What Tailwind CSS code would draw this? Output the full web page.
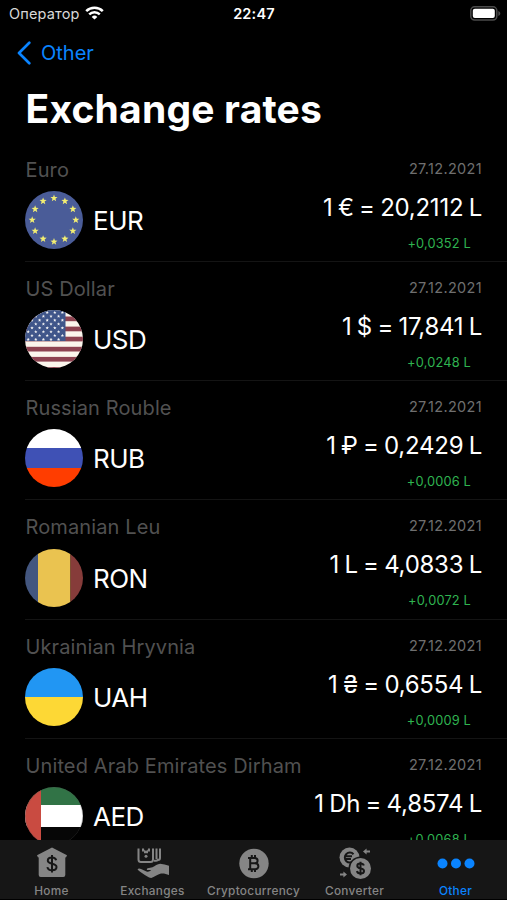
<!DOCTYPE html>
<html lang="en">
<head>
<meta charset="utf-8">
<meta name="viewport" content="width=device-width, initial-scale=1">
<title>Exchange rates</title>
<script src="https://cdn.jsdelivr.net/npm/@tailwindcss/browser@4"></script>
</head>
<body class="bg-black">
<div class="relative flex h-[900px] w-[507px] flex-col overflow-hidden bg-black font-['Inter','Liberation_Sans',sans-serif] text-white">

  <!-- Status bar -->
  <header class="grid h-[27px] shrink-0 grid-cols-3 items-center pr-[6px] pl-[9px]">
    <div class="flex items-center gap-[5px]">
      <span class="text-[14.5px] leading-[27px] tracking-[0.15px] text-[#d8d8d8]">Оператор</span>
      <svg class="mb-[1px] h-[14px] w-[19px]" viewBox="0 0 19 14" fill="none" stroke="#fff" stroke-width="2.5">
        <path d="M1.2 5.1a11.8 11.8 0 0 1 16.6 0"/>
        <path d="M4.2 8.4a7.6 7.6 0 0 1 10.6 0"/>
        <path d="M9.5 13.6 6.7 10.9a4 4 0 0 1 5.6 0z" fill="#fff" stroke="none"/>
      </svg>
    </div>
    <div class="pr-[2px] text-center text-[14.5px] font-semibold tracking-[0.2px]">22:47</div>
    <svg class="h-[15px] w-[31px] justify-self-end" viewBox="0 0 31 15">
      <rect x=".8" y=".8" width="26" height="13.2" rx="3.8" fill="none" stroke="#4b4b4b" stroke-width="1.5"/>
      <rect x="2.8" y="2.8" width="22" height="9.2" rx="2" fill="#fff"/>
      <path d="M28.3 5v5c1.2-.5 2-1.400 2-2.500s-.8-2-2-2.500z" fill="#4b4b4b"/>
    </svg>
  </header>

  <!-- Back navigation -->
  <nav class="flex h-[51px] shrink-0 items-center gap-[10.500px] pl-[16.500px] text-[#0a84ff]">
    <svg class="h-[24px] w-[14px]" viewBox="0 0 14 24" fill="none" stroke="currentColor" stroke-width="2.700" stroke-linecap="round" stroke-linejoin="round"><path d="M12.300 1.800 2 12l10.300 10.200"/></svg>
    <span class="text-[20px]">Other</span>
  </nav>

  <h1 class="h-[64.700px] shrink-0 pl-[25.500px] text-[39px] leading-[62px] font-bold tracking-[0.200px]">Exchange rates</h1>

  <main class="min-h-0 flex-1 overflow-hidden pl-[25px]" id="rates"></main>

  <!-- Tab bar -->
  <footer class="grid h-[60px] shrink-0 grid-cols-5 border-b border-black bg-[#161616] px-[1px] text-[11.800px] font-medium tracking-[0.300px] text-[#858585]">
    <div class="flex flex-col items-center gap-[2px]">
      <svg class="mt-[7px] h-[34px] w-[34px]" viewBox="0 0 34 34">
        <path d="M17 0.500 32 8.300 31 10.500 30.300 10.300V28a2 2 0 0 1-2 2H5.700a2 2 0 0 1-2-2V10.300L3 10.500 2 8.300z" fill="#858585"/>
        <path d="M21.200 13.300c-.5-2-2-2.900-4.200-2.900-2.500 0-4.200 1.200-4.200 3.100 0 4.500 8.700 2 8.700 6.500 0 2.100-1.900 3.200-4.500 3.200-2.400 0-4.200-1.100-4.600-3.100M17 8v17.500" fill="none" stroke="#161616" stroke-width="2"/>
      </svg>
      <span>Home</span>
    </div>
    <div class="flex flex-col items-center gap-[2px]">
      <svg class="mt-[7px] h-[34px] w-[34px]" viewBox="0 0 34 34"><use href="#hand"/></svg>
      <span>Exchanges</span>
    </div>
    <div class="flex flex-col items-center gap-[2px]">
      <svg class="mt-[7px] h-[34px] w-[34px]" viewBox="0 0 34 34"><use href="#coin"/></svg>
      <span>Cryptocurrency</span>
    </div>
    <div class="flex flex-col items-center gap-[2px]">
      <svg class="mt-[7px] h-[34px] w-[34px]" viewBox="0 0 34 34"><use href="#convert"/></svg>
      <span>Converter</span>
    </div>
    <div class="flex flex-col items-center gap-[2px] text-[#0a84ff]">
      <svg class="mt-[7px] h-[34px] w-[38px]" viewBox="0 0 38 34" fill="currentColor"><circle cx="5.500" cy="16.500" r="5"/><circle cx="19" cy="16.500" r="5"/><circle cx="32.500" cy="16.500" r="5"/></svg>
      <span>Other</span>
    </div>
  </footer>
</div>

<svg class="absolute size-0">
  <defs>
    <path id="star" d="M0-3.400.85-1.150 3.250-1.050 1.350.45 2 2.750 0 1.400-2 2.750-1.350.45-3.250-1.050-.85-1.150z"/>
    <g id="hand">
      <g fill="none" stroke="#858585" stroke-width="2">
        <path d="M2.500 1.500V12.500a2.500 2.500 0 0 0 2.500 2.500H14.500a2.500 2.500 0 0 0 2.500-2.500V1.500"/>
        <path d="M18 13.800h2a2 2 0 0 0 2-2M20.500 1.500V12M24 1.500V11a2 2 0 0 1-2 2"/>
      </g>
      <path d="M6 1.500h2c0 1.700.6 2.200 2 2.200s2-.5 2-2.200h2V4.500h-2V6.200H8V4.500H6z" fill="#858585"/>
      <circle cx="10" cy="9.300" r="1.500" fill="#858585"/>
    
      <path d="M1.500 22.200c1-1 2.300-.8 3.500-.2l5.500 2.600c1.300.5 2.500.2 3.500-.6l1.200-1H11c-.4-.9 0-1.500.8-1.700l4.700-1c2.500-1.400 5-3.300 7.600-3.500 3 .4 6 1 8.900 1.900V28c-2.600-1-5.300-1.700-8-1.400-3.700.9-6.700 3.400-9.800 4.300-2.800-.4-5.700-2.600-8.500-4.500-2-1.200-4-2.400-5.200-4.200z" fill="#858585"/>
    </g>
    <g id="coin">
      <circle cx="17" cy="16.500" r="14.700" fill="#858585"/>
      <path d="M13.200 11v11.200M11 11h6.600c4 0 4 5.300 0 5.300h-4.300M11 22.200h7.200c4.300 0 4.300-5.900-.3-5.900M14.800 8v3M18 8v3M14.800 22v3M18 22v3" fill="none" stroke="#161616" stroke-width="2"/>
    </g>
    <g id="convert">
      <circle cx="11.500" cy="10.500" r="10" fill="#858585"/>
      <path d="M15.500 7.200a5 5 0 1 0 0 6.800M8 9.300h6M8 12h5" fill="none" stroke="#161616" stroke-width="2"/>
      <circle cx="22.500" cy="21.500" r="12" fill="#161616"/>
      <circle cx="22.500" cy="21.500" r="10.500" fill="#858585"/>
      <path d="M25.800 18.600c-.4-1.400-1.600-2-3.300-2-2 0-3.200 1-3.200 2.300 0 3.400 6.700 1.600 6.700 5 0 1.600-1.500 2.500-3.500 2.500-1.900 0-3.200-.8-3.500-2.400M22.500 14.800v13.400" fill="none" stroke="#161616" stroke-width="2"/>
      <path d="M25 4.500l3.600-3.100v2.100H32v2h-3.400v2.100zM9 27.500l-3.600-3.100v2.100H2v2h3.400v2.100z" fill="#858585"/>
    </g>
  </defs>
</svg>

<script>
  const at = (x, y, s = 1.1) => `<use href="#star" transform="translate(${x} ${y}) scale(${s})"/>`;
  const ring = Array.from({length: 12}, (_, i) => {
    const a = i * Math.PI / 6;
    return at((29 + 21.8 * Math.sin(a)).toFixed(2), (29 - 21.8 * Math.cos(a)).toFixed(2));
  }).join('');
  let dots = '';
  for (let r = 0; r < 8; r++)
    for (let c = 0; c < 5; c++)
      dots += at((r % 2 ? 3.200 : 7) + c * 7.6, 2.500 + r * 3.850, 0.52);
  const bars = Array.from({length: 6}, (_, i) => `<rect y="${6.5 + i * 10.1}" width="58" height="4.700" fill="#8e4351"/>`).join('');
  const flags = {
    EUR: `<path fill="#4a5c98" d="M0 0h58v58H0z"/><g fill="#f3ee72">${ring}</g>`,
    USD: `<path fill="#fbf5ec" d="M0 0h58v58H0z"/>${bars}<path fill="#40568a" d="M0 0h40.500v31H0z"/><g fill="#f4f4f4">${dots}</g>`,
    RUB: `<path fill="#fff" d="M0 0h58v19H0z"/><path fill="#3f51b5" d="M0 19h58v20H0z"/><path fill="#ff3d00" d="M0 39h58v19H0z"/>`,
    RON: `<path fill="#43567f" d="M0 0h13v58H0z"/><path fill="#eac350" d="M13 0h32.500v58H13z"/><path fill="#863c3a" d="M45.500 0H58v58H45.500z"/>`,
    UAH: `<path fill="#2196f3" d="M0 0h58v29H0z"/><path fill="#fdd835" d="M0 29h58v29H0z"/>`,
    AED: `<path fill="#317346" d="M0 0h58v18H0z"/><path fill="#fff" d="M0 18h58v22H0z"/><path fill="#060606" d="M0 40h58v18H0z"/><path fill="#c94b41" d="M0 0h16v58H0z"/><circle cx="29" cy="29" r="28.700" fill="none" stroke="#555" stroke-opacity=".5" stroke-width=".6"/>`
  };
  const rows = [
    ['Euro', 'EUR', '1 € = 20,2112 L', '+0,0352 L'],
    ['US Dollar', 'USD', '1 $ = 17,841 L', '+0,0248 L'],
    ['Russian Rouble', 'RUB', '1 ₽ = 0,2429 L', '+0,0006 L'],
    ['Romanian Leu', 'RON', '1 L = 4,0833 L', '+0,0072 L'],
    ['Ukrainian Hryvnia', 'UAH', '1 ₴ = 0,6554 L', '+0,0009 L'],
    ['United Arab Emirates Dirham', 'AED', '1 Dh = 4,8574 L', '+0,0068 L']
  ];
  document.getElementById('rates').innerHTML = rows.map(([name, code, rate, delta]) => `
    <section class="flex h-[119.250px] justify-between border-b border-[#141414] pt-[15px]">
      <div class="w-0 whitespace-nowrap">
        <div class="h-[24px] pl-[0.500px] text-[20px] leading-[24px] tracking-[0.120px] text-[#515151]">${name}</div>
        <div class="mt-[9.300px] flex items-center gap-[10px]">
          <svg class="size-[58px] shrink-0 rounded-full" viewBox="0 0 58 58">${flags[code]}</svg>
          <span class="pt-[1px] text-[26px] tracking-[-0.500px]">${code}</span>
        </div>
      </div>
      <div class="flex flex-col items-end pr-[25px] whitespace-nowrap">
        <div class="h-[24px] text-[14.500px] leading-[22px] tracking-[0.330px] text-[#6f6f6f]">27.12.2021</div>
        <div class="mt-[10px] h-[32px] text-[24px] leading-[32px] tracking-[-0.250px] [word-spacing:-1.100px]">${rate}</div>
        <div class="mt-[9px] h-[20px] pr-[11px] text-[12.800px] leading-[21px] tracking-[0.180px] text-[#2fb350]">${delta}</div>
      </div>
    </section>`).join('');
</script>
</body>
</html>
